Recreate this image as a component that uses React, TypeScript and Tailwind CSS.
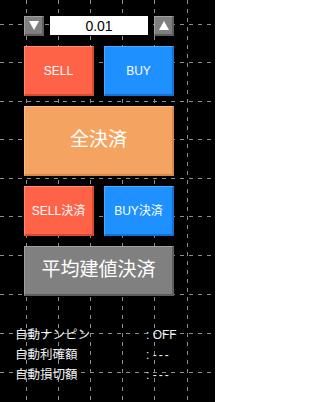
import React from "react";

const vx = [26, 58, 90, 122, 154, 187];
const hy = [24, 62, 101, 139, 178, 216, 255, 294, 333, 372];

function Grid() {
  return (
    <svg className="absolute inset-0" width={215} height={402} viewBox="0 0 215 402">
      {vx.map((x) => (
        <line key={"v" + x} x1={x + 0.5} y1={0} x2={x + 0.5} y2={402} stroke="#8c8c8c" strokeWidth={1} strokeDasharray="4 5" />
      ))}
      {hy.map((y) => (
        <line key={"h" + y} x1={0} y1={y + 0.5} x2={215} y2={y + 0.5} stroke="#8c8c8c" strokeWidth={1} strokeDasharray="4 5" />
      ))}
    </svg>
  );
}

export default function App() {
  const font = { fontFamily: '"Liberation Sans", "Noto Sans CJK JP", sans-serif' };
  return (
    <div className="relative w-[215px] h-[402px] bg-black overflow-hidden text-white" style={font}>
      <Grid />
      <div className="relative flex flex-col pt-[16px] pl-[15px]">
        <div className="flex flex-col w-[150px] ml-[9px]">
          <div className="flex h-[20px] gap-[6px]">
            <div className="w-[20px] h-[20px] bg-[#808080] border-t border-l border-[#a0a0a0] border-b-[2px] border-r-[2px] border-b-[#5e5e5e] border-r-[#5e5e5e] flex items-center justify-center">
              <svg width="10" height="9" viewBox="0 0 10 9"><polygon points="0,0 10,0 5,9" fill="#ffffff" /></svg>
            </div>
            <div className="w-[98px] h-[19px] bg-white flex items-center justify-center text-black text-[14px] leading-none">0.01</div>
            <div className="w-[20px] h-[20px] bg-[#808080] border-t border-l border-[#a0a0a0] border-b-[2px] border-r-[2px] border-b-[#5e5e5e] border-r-[#5e5e5e] flex items-center justify-center">
              <svg width="10" height="9" viewBox="0 0 10 9"><polygon points="0,9 10,9 5,0" fill="#ffffff" /></svg>
            </div>
          </div>
          <div className="flex gap-[10px] mt-[10px]">
            <div className="w-[70px] h-[50px] bg-[#ff6347] border-t border-l border-[#ff8a72] border-b-[2px] border-r-[2px] border-b-[#d9482f] border-r-[#d9482f] flex items-center justify-center text-[12px]">SELL</div>
            <div className="w-[70px] h-[50px] bg-[#1e90ff] border-t border-l border-[#4aa8ff] border-b-[2px] border-r-[2px] border-b-[#1670d0] border-r-[#1670d0] flex items-center justify-center text-[12px]">BUY</div>
          </div>
          <div className="mt-[10px] w-[150px] h-[70px] bg-[#f4a460] border-t border-l border-[#f8bc84] border-b-[2px] border-r-[2px] border-b-[#d6894a] border-r-[#d6894a] flex items-center justify-center text-[19px]">全決済</div>
          <div className="flex gap-[10px] mt-[10px]">
            <div className="w-[70px] h-[50px] bg-[#ff6347] border-t border-l border-[#ff8a72] border-b-[2px] border-r-[2px] border-b-[#d9482f] border-r-[#d9482f] flex items-center justify-center text-[12px] whitespace-nowrap">SELL決済</div>
            <div className="w-[70px] h-[50px] bg-[#1e90ff] border-t border-l border-[#4aa8ff] border-b-[2px] border-r-[2px] border-b-[#1670d0] border-r-[#1670d0] flex items-center justify-center text-[12px] whitespace-nowrap">BUY決済</div>
          </div>
          <div className="mt-[10px] w-[150px] h-[50px] bg-[#808080] border-t border-l border-[#a0a0a0] border-b-[2px] border-r-[2px] border-b-[#5e5e5e] border-r-[#5e5e5e] flex items-center justify-center text-[19px] whitespace-nowrap">平均建値決済</div>
        </div>
        <div className="mt-[29px] flex flex-col text-[12.5px] leading-[20px] text-[#f0f0f0]">
          <div className="flex"><span className="w-[131px]">自動ナンピン</span><span className="text-[12px]">: OFF</span></div>
          <div className="flex"><span className="w-[131px]">自動利確額</span><span className="text-[12px]">: <span className="tracking-[2px]">---</span></span></div>
          <div className="flex"><span className="w-[131px]">自動損切額</span><span className="text-[12px]">: <span className="tracking-[2px]">---</span></span></div>
        </div>
      </div>
    </div>
  );
}
